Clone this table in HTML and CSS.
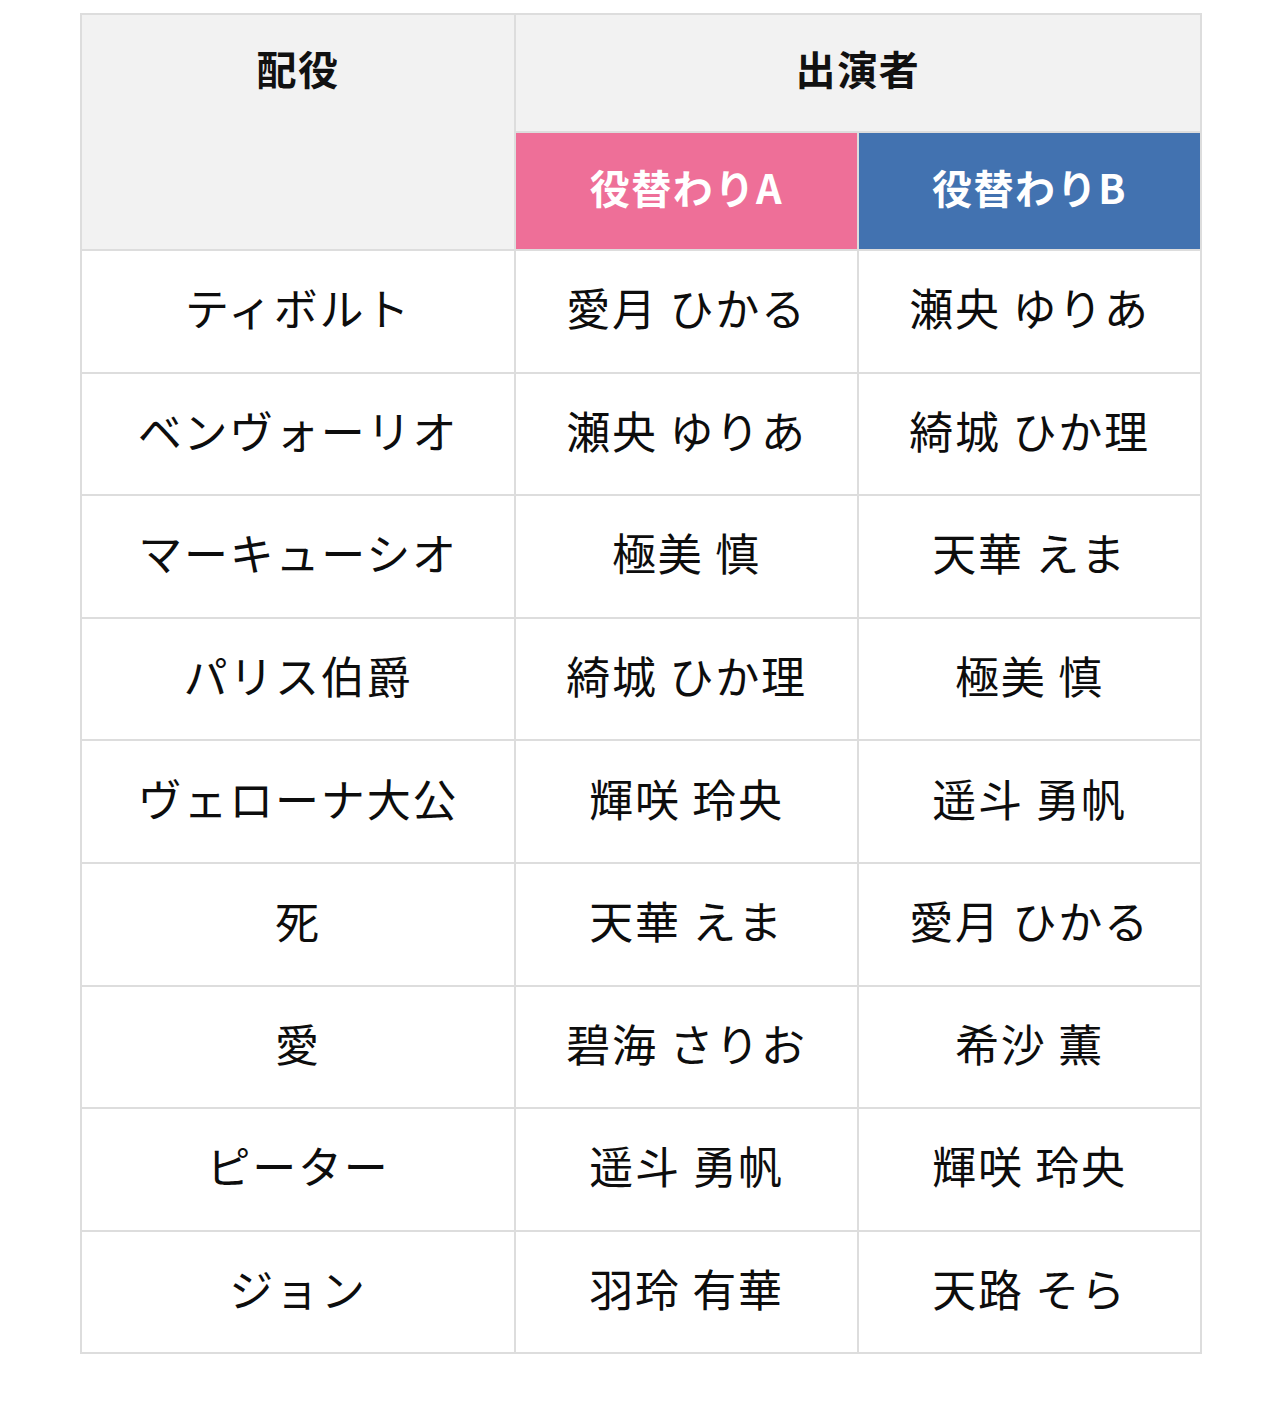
FILE: index.html
```html
<!DOCTYPE html>
<html lang="ja">
<head>
<meta charset="utf-8">
<title>配役</title>
<link rel="stylesheet" href="styles.css">
</head>
<body>
<div class="wrap">
<table class="cast">
  <colgroup>
    <col class="c-role">
    <col class="c-a">
    <col class="c-b">
  </colgroup>
  <thead>
    <tr class="h1">
      <th class="th-role" rowspan="2">配役</th>
      <th class="th-cast" colspan="2">出演者</th>
    </tr>
    <tr class="h2">
      <th class="th-a">役替わりA</th>
      <th class="th-b">役替わりB</th>
    </tr>
  </thead>
  <tbody>
    <tr><td>ティボルト</td><td>愛月 ひかる</td><td>瀬央 ゆりあ</td></tr>
    <tr><td>ベンヴォーリオ</td><td>瀬央 ゆりあ</td><td>綺城 ひか理</td></tr>
    <tr><td>マーキューシオ</td><td>極美 慎</td><td>天華 えま</td></tr>
    <tr><td>パリス伯爵</td><td>綺城 ひか理</td><td>極美 慎</td></tr>
    <tr><td>ヴェローナ大公</td><td>輝咲 玲央</td><td>遥斗 勇帆</td></tr>
    <tr><td>死</td><td>天華 えま</td><td>愛月 ひかる</td></tr>
    <tr><td>愛</td><td>碧海 さりお</td><td>希沙 薫</td></tr>
    <tr><td>ピーター</td><td>遥斗 勇帆</td><td>輝咲 玲央</td></tr>
    <tr><td>ジョン</td><td>羽玲 有華</td><td>天路 そら</td></tr>
  </tbody>
</table>
</div>
</body>
</html>
```

FILE: styles.css
```css
html, body {
  margin: 0;
  padding: 0;
  background: #ffffff;
}
body {
  font-family: "Noto Sans CJK JP", "Noto Sans", sans-serif;
  color: #111111;
}
.wrap {
  padding: 13px 79px 0 80px;
}
.cast {
  width: 1120px;
  border-collapse: collapse;
  table-layout: fixed;
  border: 2px solid #dddddd;
}
.c-role { width: 434px; }
.c-a { width: 343px; }
.c-b { width: 343px; }
.cast th,
.cast td {
  border: 2px solid #dddddd;
  text-align: center;
  vertical-align: middle;
  padding: 0 0 8px 0;
  letter-spacing: 0.04em;
}
.cast th {
  font-weight: 700;
  font-size: 40px;
  background: #f2f2f2;
}
.h1 { height: 118px; }
.h2 { height: 118px; }
.cast th.th-role,
.cast th.th-cast {
  vertical-align: top;
  padding: 24px 0 0 0;
}
.cast th.th-a {
  background-color: #ee6f98;
  color: #ffffff;
}
.cast th.th-b {
  background-color: #4272b0;
  color: #ffffff;
}
.cast tbody tr {
  height: 122.6px;
}
.cast td {
  font-size: 44px;
  font-weight: 400;
  color: #0d0d0d;
}
```
